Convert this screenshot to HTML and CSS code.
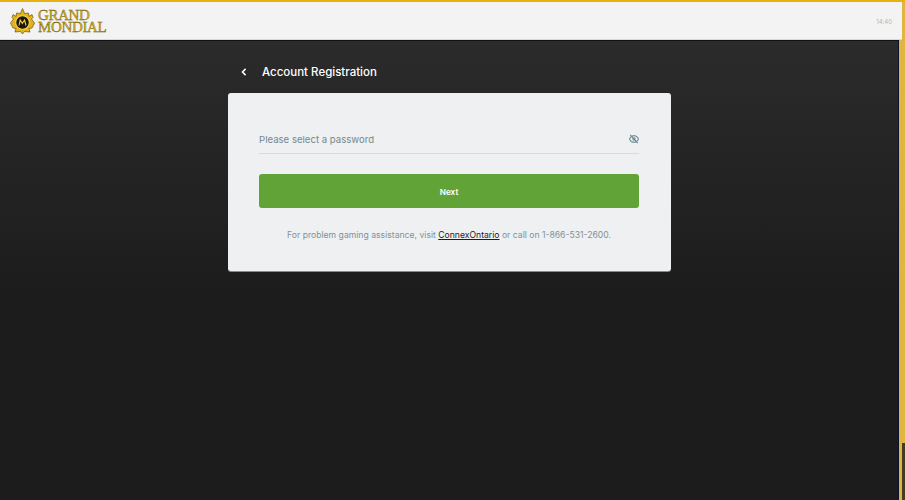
FILE: index.html
```html
<!DOCTYPE html>
<html lang="en">
<head>
<meta charset="utf-8">
<title>Account Registration</title>
<link rel="stylesheet" href="styles.css">
</head>
<body>
<header class="topbar">
  <div class="logo">
    <svg class="crest" width="25" height="27" viewBox="0 0 25 27">
      <path d="M12.5 .5 L14.6 5.5 L18.5 5 L19 8.5 L22 6.5 L23 9.5 L21.5 11 L24.5 15 L22 20 L19 20.5 L20 24 L14.5 23.5 L12.5 26 L10.5 23.5 L5 24 L6 20.5 L3 20 L.5 15 L3.5 11 L2 9.5 L3 6.5 L6 8.5 L6.5 5 L10.4 5.5 Z" fill="#e3b41a" stroke="#6b5208" stroke-width=".7"/>
      <circle cx="12.5" cy="14.5" r="6.8" fill="#1d1806" stroke="#f3d55a" stroke-width="1.1"/>
      <path d="M9 17.5 L10.2 12 L12.3 15.4 L14.6 12 L16 17.5" fill="none" stroke="#ecca45" stroke-width="1.1"/>
    </svg>
    <div class="wordmark"><span>GRAND</span><span>MONDIAL</span></div>
  </div>
  <time class="clock">14:40</time>
</header>
<div class="below">
  <main class="content">
    <div class="panel-wrap">
      <div class="title-row">
        <svg class="back" width="6" height="8" viewBox="0 0 6 8"><path d="M4.6 .9 L1.5 4 L4.6 7.1" fill="none" stroke="#fff" stroke-width="1.5"/></svg>
        <h1>Account Registration</h1>
      </div>
      <section class="card">
        <div class="field">
          <span class="placeholder">Please select a password</span>
          <svg class="eye" width="10" height="10" viewBox="0 0 10 10">
            <path d="M.4 5 C2 2 3.6 1.6 5 1.6 C6.4 1.6 8 2 9.6 5 C8 8 6.4 8.4 5 8.4 C3.6 8.4 2 8 .4 5 Z" fill="none" stroke="#7d969d" stroke-width="1.1"/>
            <circle cx="5" cy="5" r="1.7" fill="#7d969d"/>
            <path d="M1.2 .8 L8.8 9.2" stroke="#6f8a92" stroke-width="1.1"/>
          </svg>
        </div>
        <button class="next" type="button">Next</button>
        <p class="help">For problem gaming assistance, visit <a href="#">ConnexOntario</a> or call on 1-866-531-2600.</p>
      </section>
    </div>
  </main>
  <div class="rail"><div class="thumb"></div></div>
</div>
</body>
</html>
```
FILE: styles.css
```css
* { box-sizing: border-box; }
html, body { margin: 0; height: 100%; overflow: hidden; }
body {
  display: flex;
  flex-direction: column;
  height: 500px;
  background: #e0b542;
  border-top: 2px solid #e5b20f;
  font-family: Inter, "Liberation Sans", sans-serif;
}
.topbar {
  flex: none;
  width: 902px;
  height: 38px;
  display: flex;
  align-items: center;
  justify-content: space-between;
  padding: 1px 10px 0 10px;
  background: #f3f3f3;
  border-bottom: 1px solid #d8d8d8;
}
.logo { display: flex; align-items: center; gap: 3px; }
.crest { display: block; }
.wordmark {
  display: flex;
  flex-direction: column;
  font-family: "Liberation Serif", serif;
  font-size: 15px;
  line-height: 12px;
  letter-spacing: -.35px;
  color: #dcb416;
  -webkit-text-stroke: .35px #5c4a08;
}
.clock { font-size: 6px; color: #b5b5b5; }
.below { flex: 1; min-height: 0; display: flex; }
.content {
  flex: 1;
  display: flex;
  justify-content: center;
  padding-left: 1px;
  background: linear-gradient(#2b2b2b, #1c1c1c 260px);
  border-top: 1px solid #111;
  border-right: 1px solid #0d1330;
}
.panel-wrap { width: 443px; }
.title-row {
  height: 52px;
  display: flex;
  align-items: center;
  gap: 15px;
  padding-left: 13px;
  padding-top: 10px;
}
.back { flex: none; }
h1 { margin: 0; font-size: 11.5px; font-weight: 500; color: #fff; }
.card {
  height: 178px;
  padding: 29px 32px 0 31px;
  background: #eef0f2;
  border-radius: 3px;
  box-shadow: 0 1px 0 #8a8a8a;
}
.field {
  height: 32px;
  display: flex;
  align-items: center;
  justify-content: space-between;
  padding-top: 3px;
  border-bottom: 1px solid #d6dcde;
}
.placeholder { font-size: 9.6px; color: #73898f; }
.next {
  display: block;
  width: 100%;
  height: 34px;
  margin-top: 20px;
  padding: 1px 0 0;
  border: 0;
  border-radius: 3px;
  background: #62a338;
  color: #fff;
  font: 600 8.2px Inter, "Liberation Sans", sans-serif;
}
.help {
  margin: 21px 0 0;
  text-align: center;
  font-size: 8.63px;
  line-height: 12px;
  color: #7f939a;
}
.help a { color: #1c1c1c; }
.rail {
  flex: none;
  width: 6px;
  display: flex;
  align-items: flex-end;
  justify-content: flex-end;
}
.thumb { width: 3px; height: 57px; background: #453c22; }
```
